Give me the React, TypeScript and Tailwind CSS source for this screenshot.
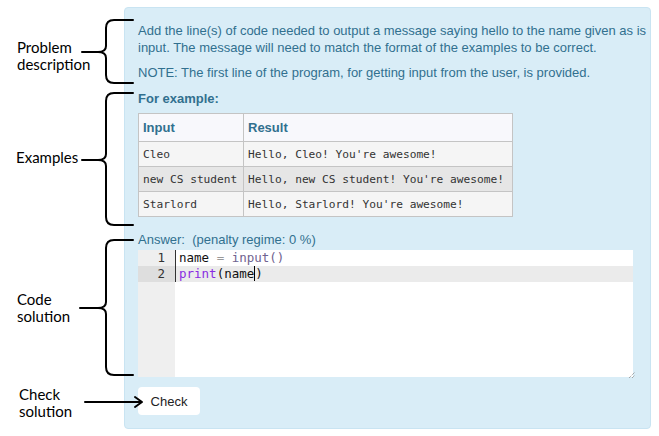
import React from 'react';

const EXAMPLES = [
  { input: 'Cleo', result: "Hello, Cleo! You're awesome!", bg: 'bg-[#f5f5f5]' },
  { input: 'new CS student', result: "Hello, new CS student! You're awesome!", bg: 'bg-[#e6e6e6]' },
  { input: 'Starlord', result: "Hello, Starlord! You're awesome!", bg: 'bg-[#f5f5f5]' },
];

// curly brace pointing left, tip at x=tip, ends at x=133
function brace(t: number, m: number, b: number, tip: number) {
  return `M133,${t} L114,${t} Q106,${t} 106,${t + 8} L106,${m - 6} Q106,${m} 98,${m} L${tip},${m} M98,${m} Q106,${m} 106,${m + 6} L106,${b - 8} Q106,${b} 114,${b} L133,${b}`;
}

function Annotations() {
  return (
    <>
      <div className="absolute inset-0 font-['Lato',sans-serif] text-[15px] leading-[17px] text-black">
        <div className="absolute left-[17px] top-[39px]">
          Problem
          <br />
          description
        </div>
        <div className="absolute left-[16px] top-[149px]">Examples</div>
        <div className="absolute left-[17px] top-[291px]">
          Code
          <br />
          solution
        </div>
        <div className="absolute left-[19px] top-[386px]">
          Check
          <br />
          solution
        </div>
      </div>
      <svg className="absolute left-0 top-0 z-10 pointer-events-none" width="150" height="436" viewBox="0 0 150 436">
        <g fill="none" stroke="#000" strokeWidth="2" strokeLinecap="round" strokeLinejoin="round">
          <path d={brace(20, 52, 83, 82)} />
          <path d={brace(93, 160, 225, 82)} />
          <path d={brace(240, 308, 375, 80)} />
          <path d="M85,402 L141,402 M135,397 L142,402 L135,407" />
        </g>
      </svg>
    </>
  );
}

function CodeEditor() {
  return (
    <div className="relative mt-[2px] w-[495px] h-[127px] bg-white flex font-['DejaVu_Sans_Mono',monospace] text-[12.5px] leading-[16px]">
      <div className="w-[37px] shrink-0 bg-[#efefef] flex flex-col">
        <div className="h-[16px] pr-[10px] text-right text-[#333]">1</div>
        <div className="h-[16px] pr-[10px] text-right text-[#333] bg-[#dedede]">2</div>
      </div>
      <div className="flex-1 flex flex-col">
        <div className="h-[16px] border-l border-[#333] pl-[3px] whitespace-pre text-[#111]">
          name <span className="text-[#999]">=</span> <span className="text-[#6f6390]">input()</span>
        </div>
        <div className="h-[16px] border-l border-[#333] pl-[3px] whitespace-pre bg-[#ebebeb] text-[#111]">
          <span className="text-[#8a2be2]">print</span>(name<span className="border-l border-black" />)
        </div>
      </div>
      <svg className="absolute -right-[3px] -bottom-[2px]" width="8" height="8" viewBox="0 0 8 8">
        <g stroke="#888" strokeWidth="1" strokeDasharray="1 1">
          <path d="M1,7 L7,1" />
          <path d="M4,7 L7,4" />
        </g>
      </svg>
    </div>
  );
}

export default function App() {
  return (
    <div className="relative w-[659px] h-[436px] bg-white flex font-['Liberation_Sans',Arial,sans-serif] overflow-hidden">
      <div className="w-[124px] shrink-0" />
      <Annotations />
      <div className="mt-[7px] w-[527px] h-[422px] bg-[#d9edf7] border border-[#c9e4f2] rounded-[4px] pl-[13px] pt-[14px] text-[13px] leading-[17px] text-[#31708f]">
        <p>Add the line(s) of code needed to output a message saying hello to the name given as is input. The message will need to match the format of the examples to be correct.</p>
        <p className="mt-[8px]">NOTE: The first line of the program, for getting input from the user, is provided.</p>
        <p className="mt-[9px] font-bold">For example:</p>
        <table className="mt-[6px] border-collapse border border-[#c4c4c4] table-fixed w-[375px]">
          <thead>
            <tr className="h-[28px] bg-[#f8f8fc]">
              <th className="w-[105px] border border-[#c4c4c4] px-[4px] text-left font-bold">Input</th>
              <th className="border border-[#c4c4c4] px-[4px] text-left font-bold">Result</th>
            </tr>
          </thead>
          <tbody className="font-['DejaVu_Sans_Mono',monospace] text-[11.2px] text-[#333]">
            {EXAMPLES.map((ex) => (
              <tr key={ex.input} className={`h-[25px] ${ex.bg}`}>
                <td className="border border-[#c4c4c4] px-[4px] whitespace-pre">{ex.input}</td>
                <td className="border border-[#c4c4c4] px-[4px] whitespace-pre">{ex.result}</td>
              </tr>
            ))}
          </tbody>
        </table>
        <p className="mt-[14px] whitespace-pre">Answer:  (penalty regime: 0 %)</p>
        <CodeEditor />
        <button className="mt-[10px] w-[62px] h-[28px] bg-white rounded-[4px] text-[13px] text-[#222]">Check</button>
      </div>
    </div>
  );
}
